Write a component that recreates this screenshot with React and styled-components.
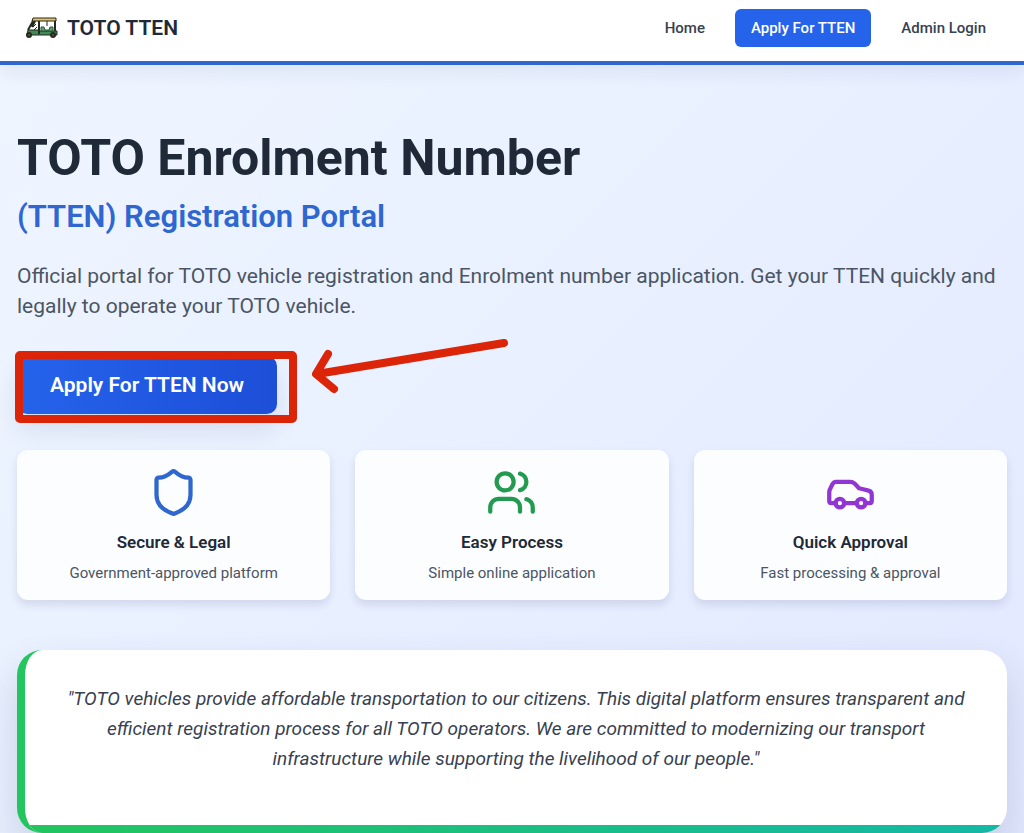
import React from "react";
import styled, { createGlobalStyle } from "styled-components";
import { Shield, Users, Car } from "lucide-react";

const GlobalStyle = createGlobalStyle`
  *, *::before, *::after { box-sizing: border-box; }
  body {
    margin: 0;
    font-family: Roboto, "Liberation Sans", sans-serif;
    color: #1f2937;
    background: #e6ebfe;
  }
  h1, h2, h3, p { margin: 0; }
`;

const Page = styled.div`
  min-height: 100vh;
  background: linear-gradient(135deg, #eff6ff 0%, #e0e7ff 115%);
`;

const Header = styled.header`
  position: relative;
  display: flex;
  align-items: center;
  justify-content: space-between;
  padding: 9px 22px 14px 25px;
  background: #fff;
  border-bottom: 4px solid #2f66d0;
  box-shadow: 0 10px 16px rgba(30, 41, 80, 0.06);
`;

const Brand = styled.a`
  display: flex;
  align-items: center;
  gap: 8px;
  color: #1f2937;
  text-decoration: none;
  font-size: 21px;
  line-height: 32px;
  font-weight: 600;
`;

const Nav = styled.nav`
  display: flex;
  align-items: center;
  gap: 14px;
`;

const NavLink = styled.a`
  padding: 0 16px;
  border-radius: 6px;
  font-size: 15px;
  line-height: 38px;
  font-weight: 500;
  text-decoration: none;
  color: ${(p) => (p.$active ? "#fff" : "#374151")};
  background: ${(p) => (p.$active ? "#2563eb" : "transparent")};
`;

const Main = styled.main`
  padding: 61px 17px 0;
`;

const Title = styled.h1`
  font-size: 50px;
  line-height: 64px;
  font-weight: 700;
`;

const Subtitle = styled.h2`
  margin-top: 9px;
  font-size: 31px;
  line-height: 36px;
  font-weight: 600;
  color: #2f66d0;
`;

const Lead = styled.p`
  margin-top: 26px;
  font-size: 21px;
  line-height: 30px;
  color: #4b5563;
`;

const CallToAction = styled.div`
  position: relative;
  display: flex;
  margin-top: 35px;
`;

const ApplyButton = styled.button`
  padding: 0 33px;
  border: 0;
  border-radius: 10px;
  font-family: inherit;
  font-size: 21px;
  line-height: 58px;
  font-weight: 600;
  color: #fff;
  background: linear-gradient(90deg, #2563eb, #1d4ed8);
  box-shadow: 0 16px 24px rgba(30, 41, 80, 0.1);
`;

const Highlight = styled.span`
  position: absolute;
  inset: -5px auto -9px -2px;
  width: 282px;
  border: 8px solid #dc2408;
  border-radius: 5px;
  pointer-events: none;
`;

const Pointer = styled.svg`
  position: absolute;
  left: 290px;
  top: -21px;
  pointer-events: none;
`;

const Features = styled.section`
  display: grid;
  grid-template-columns: repeat(3, 1fr);
  gap: 25px;
  margin-top: 36px;
`;

const Card = styled.article`
  display: flex;
  flex-direction: column;
  align-items: center;
  padding: 17px 17px 16px;
  border-radius: 11px;
  background: #fcfdff;
  box-shadow: 0 5px 8px rgba(30, 41, 80, 0.12);
  text-align: center;
`;

const CardTitle = styled.h3`
  margin-top: 12px;
  font-size: 17px;
  line-height: 25px;
  font-weight: 600;
`;

const CardText = styled.p`
  margin-top: 8px;
  font-size: 15px;
  line-height: 21px;
  color: #4b5563;
`;

const Statement = styled.section`
  position: relative;
  overflow: hidden;
  margin-top: 50px;
  padding: 34px 34px 59px;
  border-left: 8px solid #22c55e;
  border-radius: 25px;
  background: #fff;
  box-shadow: 0 20px 40px rgba(30, 41, 80, 0.16);

  &::after {
    content: "";
    position: absolute;
    left: 0;
    right: 0;
    bottom: 0;
    height: 8px;
    background: linear-gradient(90deg, #22c55e, #14b8a6);
  }
`;

const Quote = styled.blockquote`
  margin: 0;
  font-size: 19px;
  line-height: 30px;
  font-style: italic;
  text-align: center;
  color: #374151;
`;

function TotoLogo() {
  return (
    <svg width="34" height="22" viewBox="0 0 34 22" aria-hidden="true">
      <path d="M7 3 H31 L30 13 H33 V17 H3 V13 L7 8Z" fill="#fff" />
      <path d="M8 1 H31 V4 H7Z" fill="#e3c565" stroke="#25291f" />
      <path d="M3 13 H13 L15 14 H32 V18 H2Z" fill="#3f8a55" stroke="#25291f" />
      <path d="M8 4 L3 13 M10 4 L7 10 M14 4 V17 M30 4 V14" fill="none" stroke="#25291f" strokeWidth="2" />
      <path d="M8 10 L11 7 M9 13 L12 10" stroke="#25291f" />
      <path d="M16 10 H19 L20 13 H24 L25 10 H28 V14 H16Z" fill="#57a66a" stroke="#34523b" />
      <path d="M22 4 V9" stroke="#25291f" />
      <circle cx="4" cy="18" r="2" fill="#555" stroke="#25291f" strokeWidth="2" />
      <circle cx="28" cy="18" r="2" fill="#555" stroke="#25291f" strokeWidth="2" />
    </svg>
  );
}

const features = [
  { icon: Shield, color: "#2f66d0", title: "Secure & Legal", text: "Government-approved platform" },
  { icon: Users, color: "#229a50", title: "Easy Process", text: "Simple online application" },
  { icon: Car, color: "#9135d3", title: "Quick Approval", text: "Fast processing & approval" },
];

export default function App() {
  return (
    <>
      <GlobalStyle />
      <Page>
        <Header>
          <Brand href="#"><TotoLogo />TOTO TTEN</Brand>
          <Nav>
            <NavLink href="#home">Home</NavLink>
            <NavLink href="#apply" $active>Apply For TTEN</NavLink>
            <NavLink href="#admin">Admin Login</NavLink>
          </Nav>
        </Header>
        <Main>
          <Title>TOTO Enrolment Number</Title>
          <Subtitle>(TTEN) Registration Portal</Subtitle>
          <Lead>
            Official portal for TOTO vehicle registration and Enrolment number application. Get your TTEN quickly and
            legally to operate your TOTO vehicle.
          </Lead>
          <CallToAction>
            <ApplyButton type="button">Apply For TTEN Now</ApplyButton>
            <Highlight />
            <Pointer width="210" height="64" viewBox="0 0 210 64" fill="none" stroke="#dc2408" strokeWidth="8" strokeLinecap="round" strokeLinejoin="round" aria-hidden="true">
              <path d="M197 8 L10 39 M21 19 L9 39 L27 54" />
            </Pointer>
          </CallToAction>
          <Features>
            {features.map(({ icon: Icon, color, title, text }) => (
              <Card key={title}>
                <Icon size={51} color={color} aria-hidden="true" />
                <CardTitle>{title}</CardTitle>
                <CardText>{text}</CardText>
              </Card>
            ))}
          </Features>
          <Statement>
            <Quote>
              "TOTO vehicles provide affordable transportation to our citizens. This digital platform ensures
              transparent and efficient registration process for all TOTO operators. We are committed to modernizing
              our transport infrastructure while supporting the livelihood of our people."
            </Quote>
          </Statement>
        </Main>
      </Page>
    </>
  );
}
